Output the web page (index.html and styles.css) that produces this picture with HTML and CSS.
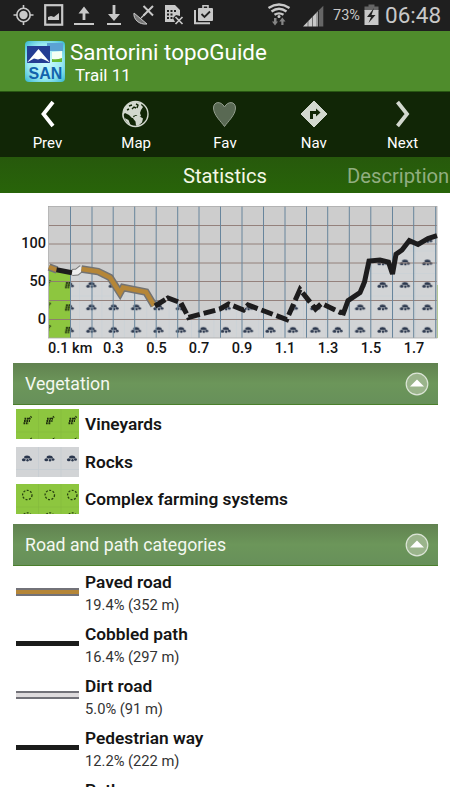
FILE: index.html
```
<!DOCTYPE html>
<html>

<head>
    <meta charset="utf-8">
    <title>Santorini topoGuide</title>
    <link rel="stylesheet" href="styles.css">
</head>

<body>
    <!-- Status bar -->
    <div class="status-bar">
        <svg class="status-icons" width="450" height="31" viewBox="0 0 450 31">
            <g fill="none" stroke="#c8c8c8">
                <circle cx="23.5" cy="15" r="6.7" stroke-width="1.6"/>
                <path d="M23.5 5v4M23.5 21v4M13.5 15h4M29.5 15h4" stroke-width="1.6"/>
                <rect x="45.2" y="5.2" width="17" height="19.5" stroke-width="2.2"/>
                <path d="M74 24h20M107 24h14" stroke-width="1.8"/>
                <path d="M84 20V12M114 5v11" stroke-width="2.8"/>
                <path d="M143.5 6l9.5 9.5M153 6l-9.5 9.5" stroke-width="2"/>
                <path d="M134 13c-1 6 5 12 13 11z" fill="#777" stroke-width="1"/>
                <path d="M141 18l4-4" stroke-width="1.3"/>
                <path d="M175.5 17l7 7M182.5 17l-7 7" stroke-width="1.7"/>
                <path d="M195 10v13.2h15" stroke-width="2"/>
                <path d="M203 8V5.8h5V8" stroke-width="1.6"/>
            </g>
            <g fill="#c8c8c8">
                <circle cx="23.5" cy="15" r="4.2"/>
                <path d="M48 20v-3l3-1 3 1 5-4v7zM78.5 13.5L84 6.5l5.5 7zM108 14h12l-6 7z"/>
                <path fill-rule="evenodd" d="M165 5h10l5 5v6l-4-1-3 3 2 4h-10zM167 10v2h2v-2zM170.5 10v2h2v-2zM174 10v2h2v-2zM167 13.5v2h2v-2zM170.5 13.5v2h2v-2zM167 17v2h2v-2zM170.5 17v2h2v-2z"/>
                <rect x="198" y="8" width="15" height="13" rx="1"/>
            </g>
            <path d="M201.500 14l3 3 5.500-5.500" fill="none" stroke="#222" stroke-width="1.8"/>
            <!-- wifi -->
            <g fill="none" stroke="#c8c8c8" stroke-width="2.3">
                <path d="M268.500 8q10.500-7 21 0M271.500 11.500q7.500-5.500 15 0M274.500 14.800q4.500-3 9 0"/>
            </g>
            <circle cx="279" cy="16.500" r="1.500" fill="#c8c8c8"/>
            <path d="M276.500 18v3.500h1.500l-3 4-3-4h2V18zM283.500 25v-3.500h2l-3.200-4-3 4h2V25z" fill="#858585"/>
            <!-- signal -->
            <path d="M303 26.500L318 11v15.500z" fill="#c8c8c8"/>
            <path d="M318.800 10.200l4.500-4.500v20.800h-4.500z" fill="#666"/>
            <path d="M308 21v6M312.500 16v11M317 11v16" stroke="#333" stroke-width=".6"/>
            <!-- battery -->
            <path d="M368.500 4.500h6v2h4V11h-14V6.500h4z" fill="#666"/>
            <path d="M364.500 10h14v15h-14z" fill="#c8c8c8"/>
            <path d="M374 8l-7 9h4l-2.500 6 7-8h-4z" fill="#222"/>
        </svg>
        <span class="battery">73%</span>
        <span class="clock">06:48</span>
    </div>

    <!-- Title -->
    <div class="header">
        <svg class="logo" width="40" height="41" viewBox="0 0 40 41">
            <defs>
                <radialGradient id="sky" cx=".5" cy=".5" r=".7">
                    <stop offset="0" stop-color="#d2fbff"/>
                    <stop offset=".6" stop-color="#9beaf2"/>
                    <stop offset="1" stop-color="#35b6cf"/>
                </radialGradient>
            </defs>
            <rect width="40" height="41" rx="4" fill="url(#sky)"/>
            <rect x="22" y="2" width="16" height="8" fill="#5ba2d4"/>
            <rect x="2" y="5" width="23" height="17" fill="#243d93"/>
            <path d="M2 21.500L13.500 8 25 21.500l-6-3-3-1-3 1-4-1z" fill="#fff"/>
            <path d="M27 11l10-1v11H27z" fill="#f5fff5"/>
            <path d="M27 18q5 1 10-1v4H27z" fill="#67b832"/>
            <text class="logo-text" x="20.500" y="37.500" text-anchor="middle">SAN</text>
        </svg>
        <div class="titles">
            <div class="title">Santorini topoGuide</div>
            <div class="subtitle">Trail 11</div>
        </div>
    </div>

    <!-- Buttons -->
    <div class="nav">
        <div class="nav-item">
            <svg width="28" height="28" viewBox="0 0 28 28"><path d="M20 2L10.500 14l9.500 12" fill="none" stroke="#fff" stroke-width="3.8"/></svg>
            <span>Prev</span>
        </div>
        <div class="nav-item">
            <svg width="28" height="28" viewBox="0 0 28 28">
                <circle cx="13.500" cy="14" r="12.500" fill="#112606" stroke="#d2d8ce" stroke-width="1.4"/>
                <path d="M2 9Q5 3 12 1.500l3 .5 5 1-1 2 2 2-2 3-1 3 1 3-2 1-3-2-3 1 1 2-2 0-3-3-4-2-2 2-1 4Q0 14 2 9zM13 16l4 0 4 2.500-1 4-4 3.500-2-.5-.5-4-2.500-3zM2.500 18l4 2 2 5q-4-2-6-7z" fill="#d2d8ce"/>
                <path d="M7 6l3-1M10 9l2-2 2 1M14 4l2 1-1 3M5 10l2-1" fill="none" stroke="#112606" stroke-width="1.4"/>
            </svg>
            <span>Map</span>
        </div>
        <div class="nav-item">
            <svg width="28" height="28" viewBox="0 0 28 28"><path d="M13.500 26.500C10.500 22 2.500 15 2.500 8c0-7 8-7 11-1 3-6 11-6 11 1 0 7-8 14-11 18.500z" fill="#596953" stroke="#939e8e" stroke-width="1"/></svg>
            <span>Fav</span>
        </div>
        <div class="nav-item">
            <svg width="28" height="28" viewBox="0 0 28 28">
                <path d="M14 1l13 13-13 13L1 14z" fill="#d2d8ce" stroke="#d2d8ce" stroke-linejoin="round"/>
                <path d="M10 19v-8h6V8.500l4.500 4-4.500 4V14h-3v5z" fill="#112606"/>
            </svg>
            <span>Nav</span>
        </div>
        <div class="nav-item">
            <svg width="28" height="28" viewBox="0 0 28 28"><path d="M8.500 2l9.500 12-9.500 12" fill="none" stroke="#d2d8ce" stroke-width="3.8"/></svg>
            <span>Next</span>
        </div>
    </div>

    <!-- Tabs -->
    <div class="tabs">
        <span class="tab active">Statistics</span>
        <span class="tab">Description</span>
    </div>

    <div class="content">
        <!-- Elevation profile -->
        <svg class="chart" width="450" height="170" viewBox="0 193 450 170">
            <defs>
                <g id="rock" fill="#2b374d">
                    <path d="M-3-1q0-2 3-2t3.500 2l-1 1h-4z"/>
                    <ellipse cx="-3.200" cy="1.200" rx="1.900" ry="1.500"/>
                    <ellipse cx="3.500" cy="1" rx="1.500" ry="1.300"/>
                    <circle cx=".5" cy="1.800" r="1.200"/>
                </g>
                <g id="vine" fill="none" stroke="#1d2c0d" stroke-width="1.900" stroke-dasharray="1.700 .7">
                    <path d="M-2.500-2.200h6M-3 0h6M-3.500 2.200h5M2 -2l2.500-2.500"/>
                </g>
                <pattern id="rocks" x="80" y="274" width="22.400" height="22.500" patternUnits="userSpaceOnUse">
                    <rect width="22.400" height="22.500" fill="#d2d4d6"/>
                    <path d="M0 22h22.400M22 0v22.500" stroke="#c7d0d6" stroke-width=".6"/>
                    <use href="#rock" x="11.300" y="11"/>
                </pattern>
                <pattern id="vines" x="58" y="274" width="22.400" height="22.500" patternUnits="userSpaceOnUse">
                    <rect width="22.400" height="22.500" fill="#8dc63f"/>
                    <use href="#vine" x="10.500" y="11"/>
                </pattern>
            </defs>
            <rect x="49" y="206.500" width="388" height="131.500" fill="#cdcdcd"/>
            <path d="M49 267L56.700 269.700 70.500 272.500V338H49z" fill="url(#vines)"/>
            <path d="M70.500 272.500L76 272 81.500 268.500 98 271.500 110 277.500 120 294 123 287.500 146 292 154 305.500 168 298 180 302 188.500 317.500 228 304 243.500 310 248 305 286.500 319.500 300 290 315.500 308.500 321.500 303.500 341.500 313 348 300.500 360 292.500 369 261 380 260 388.500 262 392.500 277 396 254.500 409 241 418 245 428 239 437 235.500V338H70.500z" fill="url(#rocks)"/>
            <path d="M437 285h.8v53h-.8z" fill="#a5d56c"/>
            <path d="M49 225.500h388M49 244h388M49 263h388M49 281.500h388M49 300.500h388M49 319.500h388" fill="none" stroke="#8d7873" stroke-width=".9"/>
            <path d="M70.500 206v132M92 206v132M113.200 206v132M134.700 206v132M156.200 206v132M177.700 206v132M199 206v132M220.500 206v132M242 206v132M263.500 206v132M285 206v132M306.500 206v132M327.700 206v132M349.300 206v132M370.800 206v132M392.500 206v132M413.700 206v132M435.700 206v132" fill="none" stroke="#68859c" stroke-width="1"/>
            <rect x="48.500" y="206.500" width="388.500" height="131.500" fill="none" stroke="#a7a7a7" stroke-width=".8"/>
            <path d="M72 272.500L77 272 82 268" fill="none" stroke="#777" stroke-width="7"/>
            <path d="M72 272.500L77 272 82 268" fill="none" stroke="#eee" stroke-width="5"/>
            <g fill="none" stroke="#737373" stroke-width="7.5">
                <path d="M49 267l8 3M81.500 269L98 271.500 110 277.500 120 293 123 287.500 146 292 154 305.500"/>
            </g>
            <g fill="none" stroke="#b58638" stroke-width="4.5">
                <path d="M49 267l8 3M81.500 269L98 271.500 110 277.500 120 293 123 287.500 146 292 154 305.500"/>
            </g>
            <g fill="none" stroke="#1d1c1d" stroke-width="5">
                <path d="M56.500 269.800L72 272.700"/>
                <path d="M155 306L168 298 180 302.500" stroke-dasharray="12 2"/>
                <path d="M181 303L188.500 317.500 220 309 228.500 304 243.500 310 248 305 286.700 319.500 300 289.500 315.500 309 321.500 303.500 341.500 313" stroke-dasharray="12 4"/>
                <path d="M340 312l3.500 1L348 300.700 360 292.700 364.500 282 369 261 380 260 388.500 262 392.500 274 396 254.300 402 250 409.300 240.500 418 244.500 428 238.500 437 235.700"/>
            </g>
            <g class="axis">
                <text x="46" y="248" text-anchor="end">100</text>
                <text x="46" y="286" text-anchor="end">50</text>
                <text x="46" y="323.500" text-anchor="end">0</text>
                <text x="48" y="353">0.1 km</text>
                <text x="113.300" y="353" text-anchor="middle">0.3</text>
                <text x="156.500" y="353" text-anchor="middle">0.5</text>
                <text x="199" y="353" text-anchor="middle">0.7</text>
                <text x="242" y="353" text-anchor="middle">0.9</text>
                <text x="285" y="353" text-anchor="middle">1.1</text>
                <text x="328" y="353" text-anchor="middle">1.3</text>
                <text x="371" y="353" text-anchor="middle">1.5</text>
                <text x="414" y="353" text-anchor="middle">1.7</text>
            </g>
        </svg>

        <!-- Vegetation -->
        <div class="section">
            <span>Vegetation</span>
            <svg width="24" height="24" viewBox="0 0 24 24"><circle cx="12" cy="12" r="10.800" fill="#9ab48b" stroke="#dce5d7" stroke-width="1.200"/><path d="M5 14.500l7-7 7 7z" fill="#fff"/></svg>
        </div>
        <div class="veg-list">
            <div class="veg">
                <svg width="63" height="30" viewBox="0 0 63 30">
                    <rect width="63" height="30" fill="#8dc63f"/>
                    <path d="M22.500 0v30M45 0v30M0 23h63" stroke="#83b93c" stroke-width=".6"/>
                    <use href="#vine" x="11" y="12"/><use href="#vine" x="33.500" y="12"/><use href="#vine" x="56" y="12"/>
                    <path d="M14 30l2-1M36.500 30l2-1M58.500 30l2-1" stroke="#263b10"/>
                </svg>
                <b>Vineyards</b>
            </div>
            <div class="veg">
                <svg width="63" height="30" viewBox="0 0 63 30">
                    <rect width="63" height="30" fill="#d2d4d6"/>
                    <path d="M22.500 0v30M45 0v30M0 22.500h63" stroke="#c5cdd2" stroke-width=".8"/>
                    <use href="#rock" x="11" y="11.500"/><use href="#rock" x="33.500" y="11.500"/><use href="#rock" x="56" y="11.500"/>
                </svg>
                <b>Rocks</b>
            </div>
            <div class="veg">
                <svg width="63" height="30" viewBox="0 0 63 30">
                    <rect width="63" height="30" fill="#8dc63f"/>
                    <path d="M22.500 0v30M45 0v30M0 23h63" stroke="#83b93c" stroke-width=".6"/>
                    <g fill="none" stroke="#27400f" stroke-width="1.300" stroke-dasharray="2 1.500">
                        <circle cx="11.300" cy="11" r="4.700"/><circle cx="33.800" cy="11" r="4.700"/><circle cx="56.300" cy="11" r="4.700"/>
                        <circle cx="11.300" cy="33.500" r="4.700"/><circle cx="33.800" cy="33.500" r="4.700"/><circle cx="56.300" cy="33.500" r="4.700"/>
                    </g>
                </svg>
                <b>Complex farming systems</b>
            </div>
        </div>

        <!-- Roads -->
        <div class="section">
            <span>Road and path categories</span>
            <svg width="24" height="24" viewBox="0 0 24 24"><circle cx="12" cy="12" r="10.800" fill="#9ab48b" stroke="#dce5d7" stroke-width="1.200"/><path d="M5 14.500l7-7 7 7z" fill="#fff"/></svg>
        </div>
        <div class="road-list">
            <div class="road">
                <div class="line paved"></div>
                <div><b>Paved road</b><p>19.4% (352 m)</p></div>
            </div>
            <div class="road">
                <div class="line"></div>
                <div><b>Cobbled path</b><p>16.4% (297 m)</p></div>
            </div>
            <div class="road">
                <div class="line dirt"></div>
                <div><b>Dirt road</b><p>5.0% (91 m)</p></div>
            </div>
            <div class="road">
                <div class="line"></div>
                <div><b>Pedestrian way</b><p>12.2% (222 m)</p></div>
            </div>
            <div class="road">
                <div class="line"></div>
                <div><b>Path</b></div>
            </div>
        </div>
    </div>
</body>

</html>
```
FILE: styles.css
```
body {
    margin: 0;
    width: 450px;
    height: 800px;
    overflow: hidden;
    background-color: #fff;
    font-family: Roboto, "Liberation Sans", sans-serif;
    color: #151515;
}

svg {
    display: block;
    flex-shrink: 0;
}

/* Status bar */
.status-bar {
    display: grid;
    grid-template-columns: 333px 52px 65px;
    height: 31px;
    background-color: #1f1f1f;
    color: #c8c8c8;
    line-height: 31px;
}

.status-icons {
    position: absolute;
    top: 0;
    left: 0;
}

.battery {
    grid-column: 2;
    font-size: 14.5px;
}

.clock {
    grid-column: 3;
    font-size: 22.5px;
}

/* Title bar */
.header {
    display: flex;
    box-sizing: border-box;
    height: 60px;
    padding: 10px 25px;
    gap: 5px;
    background-color: #4f8c2c;
    color: #fff;
}

.logo-text {
    font: bold 16px "Liberation Sans", sans-serif;
    fill: #1263ad;
}

.title {
    font-size: 22.4px;
    line-height: 22px;
}

.subtitle {
    font-size: 17px;
    line-height: 25px;
    padding-left: 5px;
}

/* Buttons */
.nav {
    display: flex;
    box-sizing: border-box;
    height: 66px;
    padding: 8px 3px 0;
    border-top: 1px solid #285712;
    background-color: #112606;
    color: #fff;
}

.nav-item {
    display: flex;
    flex-direction: column;
    align-items: center;
    gap: 6px;
    flex: 1;
    font-size: 15px;
    line-height: 18px;
}

/* Tabs */
.tabs {
    display: flex;
    box-sizing: border-box;
    height: 36px;
    padding-left: 183px;
    gap: 80px;
    background: linear-gradient(#27590c, #286409);
    line-height: 38px;
    font-size: 20.2px;
    white-space: nowrap;
    overflow: hidden;
}

.tab {
    color: #91ae80;
}

.tab.active {
    color: #f4f8e6;
}

/* Content */
.content {
    height: 594px;
    overflow: hidden;
}

.axis {
    font-size: 14.5px;
    font-weight: 500;
    fill: #151515;
}

.section {
    display: flex;
    box-sizing: border-box;
    align-items: center;
    justify-content: space-between;
    width: 425px;
    height: 42px;
    margin-left: 12.5px;
    padding: 0 9px 0 12.5px;
    border-bottom: 1px solid #4b7f2c;
    background: linear-gradient(#618250, #6c965a 50%, #67905a);
    color: #f4f8f1;
    font-size: 17.7px;
}

.veg-list {
    display: flex;
    flex-direction: column;
    gap: 7.5px;
    padding: 4px 0 10px 16px;
}

.veg {
    display: flex;
    align-items: center;
    gap: 6px;
    height: 30px;
}

b {
    font-size: 17.3px;
    font-weight: 600;
    line-height: 22px;
}

/* Road rows */
.road-list {
    padding: 5px 0 0 16px;
}

.road {
    display: flex;
    gap: 6px;
    height: 52px;
}

.road b {
    display: block;
}

.road p {
    margin: 2px 0 0;
    font-size: 14.7px;
    line-height: 21px;
    color: #333;
}

.line {
    box-sizing: border-box;
    width: 63px;
    height: 5px;
    margin-top: 18px;
    background-color: #1b1c1b;
}

.paved {
    height: 8px;
    margin-top: 17px;
    border-top: 2px solid #727279;
    border-bottom: 2px solid #727279;
    background-color: #b58638;
}

.dirt {
    height: 8px;
    margin-top: 16px;
    border-top: 2px solid #727279;
    border-bottom: 2px solid #727279;
    background-color: #dedbdd;
}
```
